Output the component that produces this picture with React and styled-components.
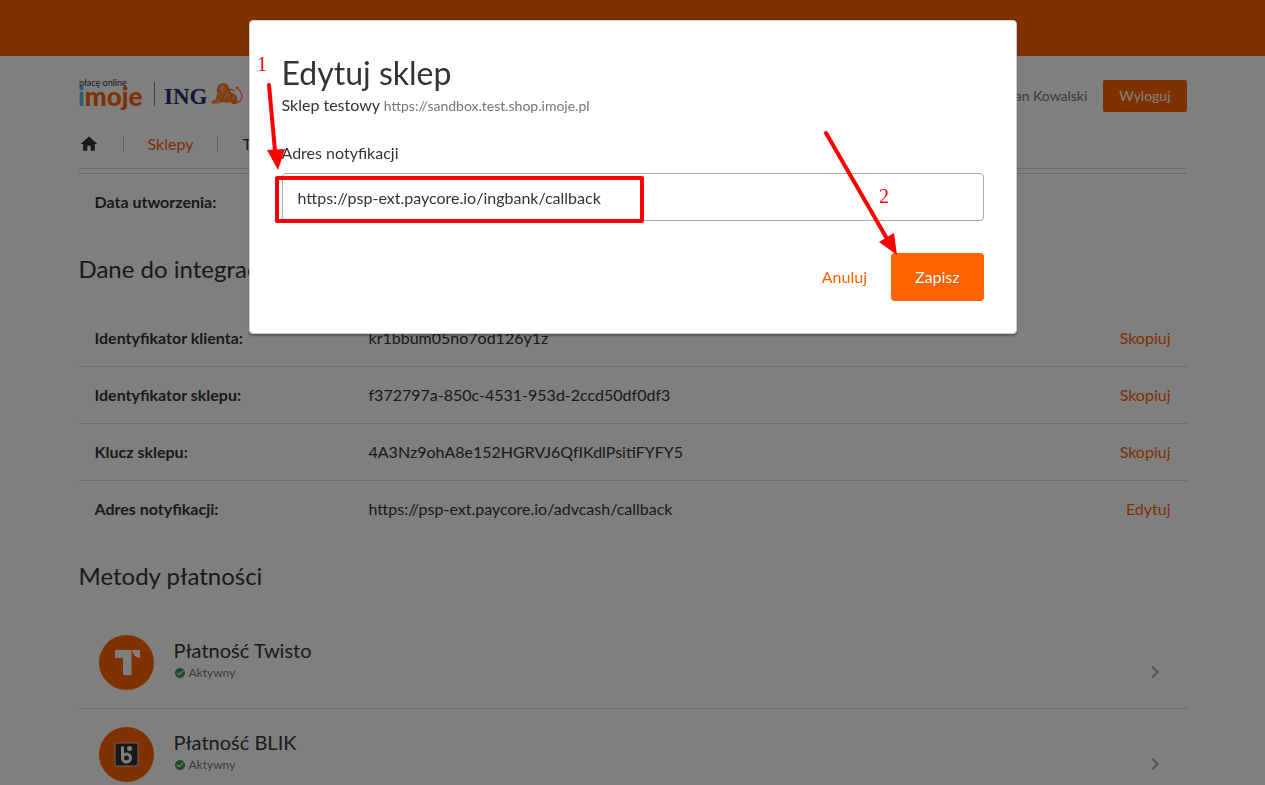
import React from "react";
import styled, { createGlobalStyle } from "styled-components";
import { MdHome, MdCheckCircle, MdChevronRight } from "react-icons/md";

const orange = "#ff6200";
const ink = "#333333";
const muted = "#767676";
const line = "#d9d9d9";

const GlobalStyle = createGlobalStyle`
  *, *::before, *::after { box-sizing: border-box; }
  body {
    margin: 0;
    background: #fff;
    color: ${ink};
    font: 400 16px/24px Lato, "Noto Sans", sans-serif;
  }
  a { text-decoration: none; }
`;

const Page = styled.div`
  height: 100vh;
  overflow: hidden;
`;

const TopBar = styled.div`
  height: 56px;
  background: ${orange};
`;

const Container = styled.div`
  max-width: 1140px;
  margin: 0 auto;
  padding: 0 16px;
`;

const Header = styled.header`
  display: flex;
  align-items: center;
  justify-content: space-between;
  height: 64px;
  padding-top: 16px;
`;

const Account = styled.div`
  display: flex;
  align-items: center;
  gap: 16px;
  color: ${muted};
  font-size: 14px;
`;

const Button = styled.button`
  height: ${(p) => (p.$small ? "32px" : "48px")};
  padding: ${(p) => (p.$small ? "0 16px" : "0 24px")};
  border: 0;
  border-radius: ${(p) => (p.$small ? "2px" : "4px")};
  background: ${(p) => (p.$plain ? "transparent" : orange)};
  color: ${(p) => (p.$plain ? orange : "#fff")};
  font: inherit;
  font-size: ${(p) => (p.$small ? "14px" : "16px")};
  cursor: pointer;
`;

const Nav = styled.nav`
  display: flex;
  align-items: center;
  gap: 24px;
  height: 49px;
  margin-bottom: 4px;
  border-bottom: 1px solid ${line};
`;

const NavLink = styled.a`
  display: flex;
  color: ${(p) => (p.$active ? orange : ink)};
`;

const NavDivider = styled.span`
  width: 1px;
  height: 16px;
  background: #c4c4c4;
`;

const DataTable = styled.table`
  width: 100%;
  border-collapse: separate;
  border-spacing: 0;
  border-top: ${(p) => (p.$ruled ? `1px solid ${line}` : "0")};

  th, td {
    height: 57px;
    padding: 0 16px;
    border-bottom: 1px solid ${line};
    text-align: left;
  }
  th { width: 274px; }
  td:last-child { text-align: right; }
  tr:last-child > * {
    height: 56px;
    border-bottom: 0;
  }
`;

const Action = styled.a`
  color: ${orange};
`;

const SectionTitle = styled.h2`
  margin: 0;
  padding: 23px 0 25px;
  font-size: 24px;
  line-height: 32px;
  font-weight: 400;
`;

const MethodList = styled.ul`
  margin: 0;
  padding: 0;
  list-style: none;
`;

const Method = styled.a`
  display: flex;
  gap: 20px;
  height: 92px;
  padding: 18px 20px;
  border-bottom: 1px solid ${line};
  color: ${ink};
`;

const MethodText = styled.div`
  flex: 1;
  padding-top: 1px;
`;

const MethodName = styled.div`
  font-size: 20px;
  line-height: 28px;
`;

const Status = styled.div`
  display: flex;
  align-items: center;
  gap: 3px;
  color: ${muted};
  font-size: 12px;
  line-height: 18px;

  svg { color: #349651; }
`;

const Chevron = styled.span`
  display: flex;
  align-items: center;
  align-self: flex-end;
  height: 36px;
  color: #a8a8a8;
`;

const Overlay = styled.div`
  position: fixed;
  inset: 0;
  display: flex;
  justify-content: center;
  align-items: flex-start;
  padding: 20px;
  background: rgba(0, 0, 0, 0.5);
`;

const Modal = styled.form`
  position: relative;
  width: 768px;
  padding: 32px;
  border: 1px solid #d0d0d0;
  border-radius: 4px;
  background: #fff;
  box-shadow: 0 2px 2px rgba(0, 0, 0, 0.3);
`;

const ModalTitle = styled.h1`
  margin: 0;
  font-size: 32px;
  line-height: 40px;
  font-weight: 400;
`;

const ShopLine = styled.p`
  margin: 0 0 24px;

  span {
    color: ${muted};
    font-size: 14px;
    line-height: 16px;
  }
`;

const Label = styled.label`
  display: block;
  margin-bottom: 8px;
`;

const Input = styled.input`
  display: block;
  width: 100%;
  height: 48px;
  padding: 0 15px;
  border: 1px solid #a8a8a8;
  border-radius: 4px;
  color: ${ink};
  font: inherit;
  outline: none;
`;

const ModalActions = styled.div`
  display: flex;
  justify-content: flex-end;
  margin-top: 32px;
`;

const Marks = styled.svg`
  position: absolute;
  top: -1px;
  left: -1px;
  overflow: visible;
  pointer-events: none;
`;

const Logo = () => (
  <svg width="166" height="36" viewBox="0 0 166 36" role="img" aria-label="imoje ING">
    <text x="0" y="8" fontFamily="Lato, sans-serif" fontSize="9" fill={ink}>płacę online</text>
    <text x="-1" y="28" fontFamily="Lato, sans-serif" fontWeight="900" fontSize="26" fill={orange}>
      <tspan fill="#70b4dc">i</tspan>moje
    </text>
    <path d="M75.5 4v24" stroke="#777" strokeWidth="1" />
    <text x="85" y="26" fontFamily="'Liberation Serif', serif" fontWeight="700" fontSize="23" fill="#1e2f6e">ING</text>
    <g fill={orange} opacity="0.85">
      <path d="M138.500 15l-1-3 1-3 2-3 3-1 3 .5 2.500 2 1.500 3.500 1.500 3.500 4 1.500 2 3 .5 3.500-1 2.500h-11l-2-1-6 1.500h-5.500l-.5-2 4-2 1-3z" />
    </g>
    <path d="M153 25c7 1.500 11-4 9.500-9-.8-3-3-5-5.500-6l2.500-1M149 12c3-1 5-1 6 1" fill="none" stroke={orange} strokeWidth="1.200" strokeLinecap="round" />
    <g fill="none" stroke="#fff" strokeWidth="0.800" opacity="0.600">
      <path d="M140.500 10.500l2 .5m3 0l1.500-.5M142.500 14l1.500 1 1.500-1M139.500 16c1 2 2 2 3 3.500m6.500-6c0 3-2 5-4 6M141 21l-3 1.500M147 17l-1 5m4-6c-1 3 0 5 2 6.500M136 24h6m5 .5h6M155.500 18c-2 1-2 3-1 5" />
    </g>
    <ellipse cx="143.500" cy="10.500" rx="2.200" ry="3" fill="#ffd0ac" opacity="0.600" />
  </svg>
);

const TwistoIcon = () => (
  <svg width="55" height="55" viewBox="0 0 55 55" aria-hidden="true">
    <circle cx="27.500" cy="27.500" r="27.500" fill={orange} />
    <path d="M16 15h16.500v25H24V23h-8z" fill="#fff" />
    <path d="M33 15h8v8c-4 0-7-3-8-8z" fill="#fff" />
  </svg>
);

const BlikIcon = () => (
  <svg width="55" height="55" viewBox="0 0 55 55" aria-hidden="true">
    <circle cx="27.500" cy="27.500" r="27.500" fill={orange} />
    <rect x="16" y="16" width="23" height="23" rx="2" fill="#333" stroke="#e4c9b8" strokeWidth="1" />
    <path d="M23.500 19.500V31" stroke="#fff" strokeWidth="3" />
    <circle cx="27.500" cy="31" r="4" fill="none" stroke="#fff" strokeWidth="3" />
    <circle cx="30.500" cy="21.500" r="2.500" fill="#fff" />
  </svg>
);

const integration = [
  ["Identyfikator klienta:", "kr1bbum05no7od126y1z", "Skopiuj"],
  ["Identyfikator sklepu:", "f372797a-850c-4531-953d-2ccd50df0df3", "Skopiuj"],
  ["Klucz sklepu:", "4A3Nz9ohA8e152HGRVJ6QfIKdlPsitiFYFY5", "Skopiuj"],
  ["Adres notyfikacji:", "https://psp-ext.paycore.io/advcash/callback", "Edytuj"],
];

const methods = [
  ["Płatność Twisto", TwistoIcon],
  ["Płatność BLIK", BlikIcon],
];

const EditDialog = () => (
  <Overlay>
    <Modal role="dialog" aria-labelledby="dialog-title" onSubmit={(e) => e.preventDefault()}>
      <ModalTitle id="dialog-title">Edytuj sklep</ModalTitle>
      <ShopLine>
        Sklep testowy <span>https://sandbox.test.shop.imoje.pl</span>
      </ShopLine>
      <Label htmlFor="callback">Adres notyfikacji</Label>
      <Input id="callback" defaultValue="https://psp-ext.paycore.io/ingbank/callback" />
      <ModalActions>
        <Button type="button" $plain>Anuluj</Button>
        <Button type="submit">Zapisz</Button>
      </ModalActions>
      <Marks width="768" height="314" viewBox="0 0 768 314" fill="#f00" aria-hidden="true">
        <g fill="none" stroke="#f00" strokeWidth="4" strokeLinecap="round" strokeLinejoin="round">
          <rect x="28" y="158" width="365" height="43" />
          <path d="M20 65l6 66M577 113l60 104" />
        </g>
        <path d="M18 130l18-1-7 21zM630 222l15-9 3 22z" />
        <text x="8" y="51" fontFamily="'Liberation Serif', serif" fontSize="20">1</text>
        <text x="630" y="183" fontFamily="'Liberation Serif', serif" fontSize="20">2</text>
      </Marks>
    </Modal>
  </Overlay>
);

export default function App() {
  return (
    <Page>
      <GlobalStyle />
      <TopBar />
      <Container>
        <Header>
          <Logo />
          <Account>
            Jan Kowalski
            <Button type="button" $small>Wyloguj</Button>
          </Account>
        </Header>
        <Nav>
          <NavLink href="#start" aria-label="Start"><MdHome size={20} /></NavLink>
          <NavDivider />
          <NavLink href="#sklepy" $active>Sklepy</NavLink>
          <NavDivider />
          <NavLink href="#transakcje">Transakcje</NavLink>
        </Nav>
        <main>
          <DataTable $ruled>
            <tbody>
              <tr>
                <th scope="row">Data utworzenia:</th>
                <td />
              </tr>
            </tbody>
          </DataTable>
          <SectionTitle>Dane do integracji</SectionTitle>
          <DataTable>
            <tbody>
              {integration.map(([label, value, action]) => (
                <tr key={label}>
                  <th scope="row">{label}</th>
                  <td>{value}</td>
                  <td><Action href="#akcja">{action}</Action></td>
                </tr>
              ))}
            </tbody>
          </DataTable>
          <SectionTitle>Metody płatności</SectionTitle>
          <MethodList>
            {methods.map(([name, Icon]) => (
              <li key={name}>
                <Method href="#metoda">
                  <Icon />
                  <MethodText>
                    <MethodName>{name}</MethodName>
                    <Status><MdCheckCircle size={12} />Aktywny</Status>
                  </MethodText>
                  <Chevron><MdChevronRight size={24} /></Chevron>
                </Method>
              </li>
            ))}
          </MethodList>
        </main>
      </Container>
      <EditDialog />
    </Page>
  );
}
